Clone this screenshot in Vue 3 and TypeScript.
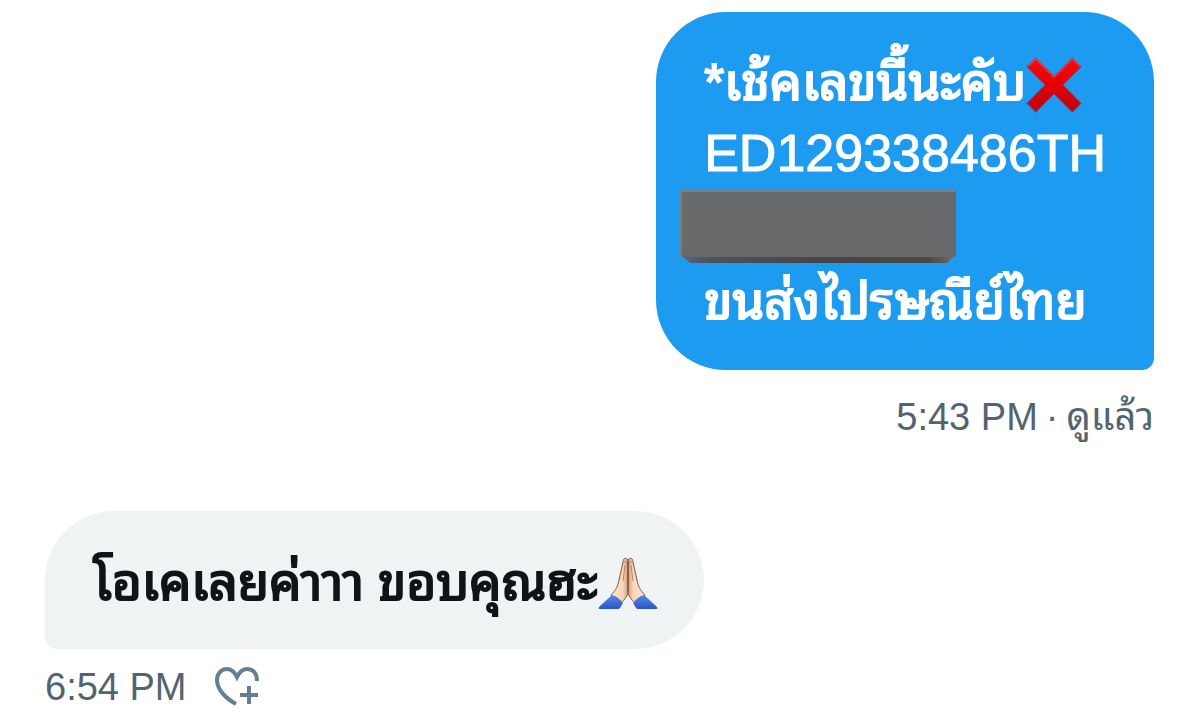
<script setup lang="ts">
interface Message {
  time: string
  status?: string
}

const sent: Message = { time: '5:43 PM', status: 'ดูแล้ว' }
const received: Message = { time: '6:54 PM' }
</script>

<template>
  <main class="chat">
    <article class="message sent">
      <div class="bubble">
        <p class="line thai">
          <span>*เช้คเลขนี้นะคับ</span>
          <svg class="emoji cross" viewBox="0 0 58 58" role="img" aria-label="❌">
            <defs>
              <linearGradient id="cross-fill" x1="0" y1="0" x2="0" y2="1">
                <stop offset="0" stop-color="#fb0a0d" />
                <stop offset="0.5" stop-color="#e50005" />
                <stop offset="1" stop-color="#b90710" />
              </linearGradient>
            </defs>
            <path d="M10 1 29 20 48 1 57 10 38 29 57 48 48 57 29 38 10 57 1 48 20 29 1 10Z" fill="url(#cross-fill)" stroke="#8d3159" stroke-width="1" />
            <path d="M2 10 10 2 29 21 48 2 56 10" fill="none" stroke="#f0606c" stroke-width="1" />
          </svg>
        </p>
        <p class="line code">ED129338486TH</p>
        <div class="redacted">
          <svg viewBox="0 0 276 73" preserveAspectRatio="none" aria-hidden="true">
            <defs>
              <linearGradient id="bar-edge" x1="0" y1="0" x2="1" y2="0">
                <stop offset="0" stop-color="#5d6684" />
                <stop offset="0.1" stop-color="#50525a" />
                <stop offset="0.5" stop-color="#454547" />
                <stop offset="0.9" stop-color="#4b4644" />
                <stop offset="1" stop-color="#77685f" />
              </linearGradient>
            </defs>
            <path d="M1 65H275L267 73H10Z" fill="url(#bar-edge)" />
            <rect width="276" height="67" rx="2" fill="#68696b" />
            <path d="M1 67V1H275" fill="none" stroke="#8b929b" stroke-width="1" />
          </svg>
        </div>
        <p class="line thai">ขนส่งไปรษณีย์ไทย</p>
      </div>
      <p class="meta">
        <span>{{ sent.time }}</span>
        <span>·</span>
        <span>{{ sent.status }}</span>
      </p>
    </article>

    <article class="message received">
      <div class="bubble">
        <p class="line thai">
          <span>โอเคเลยค่าาา ขอบคุณฮะ</span>
          <svg class="emoji hands" viewBox="0 0 60 54" role="img" aria-label="🙏🏻">
            <defs>
              <linearGradient id="skin-left" x1="0" y1="0" x2="1" y2="0">
                <stop offset="0" stop-color="#ffe4cc" />
                <stop offset="0.7" stop-color="#fbd6b8" />
                <stop offset="1" stop-color="#d09a76" />
              </linearGradient>
              <linearGradient id="skin-right" x1="1" y1="0" x2="0" y2="0">
                <stop offset="0" stop-color="#ffe4cc" />
                <stop offset="0.7" stop-color="#fbd6b8" />
                <stop offset="1" stop-color="#d09a76" />
              </linearGradient>
              <linearGradient id="sleeve" x1="0" y1="0" x2="0" y2="1">
                <stop offset="0" stop-color="#5587e4" />
                <stop offset="1" stop-color="#2857c4" />
              </linearGradient>
            </defs>
            <path d="M30 4C28 1 25 2 25 6L21 24C20 30 18 34 13 39L23 47C27 43 30 40 30 35Z" fill="url(#skin-left)" stroke="#815b48" stroke-width="1" />
            <path d="M30 4C32 1 35 2 35 6L39 24C40 30 42 34 47 39L37 47C33 43 30 40 30 35Z" fill="url(#skin-right)" stroke="#815b48" stroke-width="1" />
            <path d="M25 7C26 5 28 5 29 8M31 8C32 5 34 5 35 7M27 9 25 25M33 9 35 25" fill="none" stroke="#b98967" stroke-width="1" />
            <path d="M30 6V36" stroke="#754c38" stroke-width="1" />
            <path d="M2 53C0 53 0 52 2 50L14 39C18 40 22 43 25 47L22 52C21 53 20 53 19 53Z" fill="url(#sleeve)" />
            <path d="M58 53C60 53 60 52 58 50L46 39C42 40 38 43 35 47L38 52C39 53 40 53 41 53Z" fill="url(#sleeve)" />
          </svg>
        </p>
      </div>
      <div class="meta">
        <span>{{ received.time }}</span>
        <button type="button" class="react" aria-label="Add reaction">
          <svg viewBox="0 0 46 42" aria-hidden="true">
            <path d="M22 38C11 32 3 23 3 14C3 7 8 3 13 3C18 3 21 7 23 11C25 7 28 3 33 3C39 3 43 7 43 15" fill="none" stroke="currentColor" stroke-width="4" />
            <path d="M35 20V38M26 29H44" stroke="currentColor" stroke-width="4" />
          </svg>
        </button>
      </div>
    </article>
  </main>
</template>

<style>
body {
  margin: 0;
  background: #fff;
}
</style>

<style scoped>
.chat {
  box-sizing: border-box;
  display: flex;
  flex-direction: column;
  gap: 69px;
  padding: 12px 46px 0 45px;
  color: #0f1419;
  font-family: "Liberation Sans", "Noto Sans Thai Looped", "Noto Sans Thai", sans-serif;
}

.message {
  display: flex;
  flex-direction: column;
}

.sent {
  align-items: flex-end;
}

.received {
  align-items: flex-start;
}

.bubble {
  padding: 36px 48px 33px;
}

.sent .bubble {
  border-radius: 70px 70px 12px 70px;
  background: #1d9bf0;
  color: #fff;
}

.received .bubble {
  padding: 37px 46px 31px 48px;
  border-radius: 69px 69px 69px 12px;
  background: #eff3f4;
}

.line {
  display: flex;
  align-items: center;
  height: 70px;
  margin: 0;
  font-size: 52px;
  line-height: 70px;
  white-space: nowrap;
}

.thai {
  font-size: 51px;
  -webkit-text-stroke: 2px currentColor;
}

.code {
  -webkit-text-stroke: 1px currentColor;
}

.emoji {
  flex: none;
}

.cross {
  width: 56px;
  height: 56px;
  margin-top: 4px;
}

.hands {
  width: 60px;
  height: 54px;
}

.redacted {
  width: 276px;
  height: 73px;
  margin: 2px 0 4px -24px;
}

.redacted svg {
  display: block;
  width: 100%;
  height: 100%;
}

.meta {
  display: flex;
  align-items: center;
  gap: 8px;
  margin: 22px 0 0;
  color: #536471;
  font-size: 38px;
  line-height: 50px;
}

.received .meta {
  gap: 27px;
  margin-top: 13px;
}

.react {
  display: flex;
  padding: 0;
  border: 0;
  background: none;
  color: #657e92;
}

.react svg {
  width: 46px;
  height: 42px;
}
</style>
